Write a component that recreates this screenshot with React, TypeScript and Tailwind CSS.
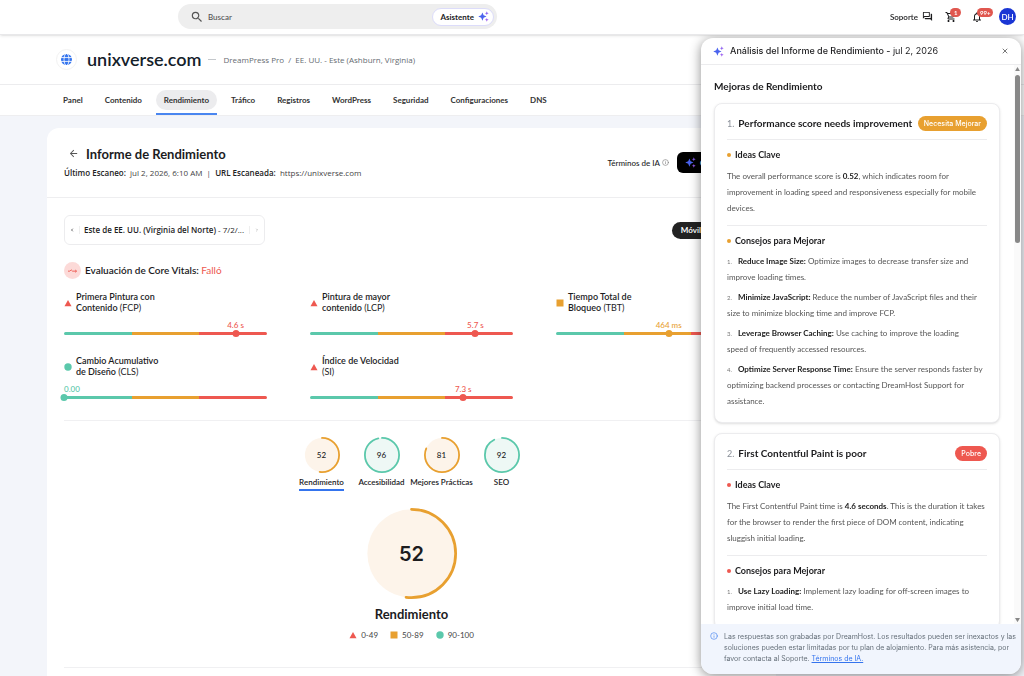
import React from 'react';
import clsx from 'clsx';
import { ChevronLeft, ChevronRight, Info, X } from 'lucide-react';
import {
  MdArrowBack,
  MdNotificationsNone,
  MdOutlineForum,
  MdOutlineShoppingCart,
  MdSearch,
} from 'react-icons/md';

type Level = 'good' | 'fair' | 'poor';

const levelColor: Record<Level, string> = {
  good: '#5bc8ab',
  fair: '#e8a030',
  poor: '#ee5850',
};

const tabs = ['Panel', 'Contenido', 'Rendimiento', 'Tráfico', 'Registros', 'WordPress', 'Seguridad', 'Configuraciones', 'DNS'];

const metrics: { name: string; code: string; value: string; pos: number; level: Level }[] = [
  { name: 'Primera Pintura con Contenido', code: '(FCP)', value: '4.6 s', pos: 84.5, level: 'poor' },
  { name: 'Pintura de mayor contenido', code: '(LCP)', value: '5.7 s', pos: 81.5, level: 'poor' },
  { name: 'Tiempo Total de Bloqueo', code: '(TBT)', value: '464 ms', pos: 55.5, level: 'fair' },
  { name: 'Cambio Acumulativo de Diseño', code: '(CLS)', value: '0.00', pos: 0, level: 'good' },
  { name: 'Índice de Velocidad', code: '(SI)', value: '7.3 s', pos: 75.5, level: 'poor' },
];

const scores: { label: string; value: number; level: Level }[] = [
  { label: 'Rendimiento', value: 52, level: 'fair' },
  { label: 'Accesibilidad', value: 96, level: 'good' },
  { label: 'Mejores Prácticas', value: 81, level: 'fair' },
  { label: 'SEO', value: 92, level: 'good' },
];

interface Finding {
  title: string;
  badge: string;
  level: Level;
  insight: React.ReactNode;
  tips: { title: string; text: string }[];
}

const findings: Finding[] = [
  {
    title: 'Performance score needs improvement',
    badge: 'Necesita Mejorar',
    level: 'fair',
    insight: (
      <>
        The overall performance score is <strong className="text-[#222]">0.52</strong>, which indicates room for
        improvement in loading speed and responsiveness especially for mobile devices.
      </>
    ),
    tips: [
      { title: 'Reduce Image Size:', text: 'Optimize images to decrease transfer size and improve loading times.' },
      { title: 'Minimize JavaScript:', text: 'Reduce the number of JavaScript files and their size to minimize blocking time and improve FCP.' },
      { title: 'Leverage Browser Caching:', text: 'Use caching to improve the loading speed\u00a0of frequently accessed resources.' },
      { title: 'Optimize Server Response Time:', text: 'Ensure the server responds faster by optimizing backend processes or contacting DreamHost Support for assistance.' },
    ],
  },
  {
    title: 'First Contentful Paint is poor',
    badge: 'Pobre',
    level: 'poor',
    insight: (
      <>
        The First Contentful Paint time is <strong className="text-[#222]">4.6 seconds</strong>. This is the duration it
        takes for the browser to render the first piece of DOM content, indicating sluggish initial loading.
      </>
    ),
    tips: [{ title: 'Use Lazy Loading:', text: 'Implement lazy loading for off-screen images to improve initial load time.' }],
  },
];

const Sparkles: React.FC<{ className?: string }> = ({ className }) => (
  <svg viewBox="0 0 20 20" className={className} aria-hidden="true">
    <path d="M8 2.500l2.200 5.300 5.300 2.200-5.300 2.200L8 17.500l-2.200-5.300L.5 10l5.300-2.200z" fill="#4a63ee" />
    <path d="M16 .5l1 2.500 2.500 1-2.500 1-1 2.500-1-2.500-2.500-1 2.500-1z" fill="#8a5cf0" />
    <path d="M16 12.500l1 2.500 2.500 1-2.500 1-1 2.500-1-2.500-2.500-1 2.500-1z" fill="#9a5cf0" />
  </svg>
);

const Globe: React.FC<{ className?: string }> = ({ className }) => (
  <svg viewBox="0 0 20 20" className={className} aria-hidden="true">
    <circle cx="10" cy="10" r="10" fill="#3474ee" />
    <g fill="none" stroke="#fff" strokeWidth="1.5">
      <ellipse cx="10" cy="10" rx="4.500" ry="11" />
      <path d="M0 6.500h20M0 13.500h20" />
    </g>
  </svg>
);

const Marker: React.FC<{ level: Level; className?: string }> = ({ level, className }) => (
  <svg viewBox="0 0 8 8" className={clsx('size-2 shrink-0', className)} fill={levelColor[level]} aria-hidden="true">
    {level === 'good' && <circle cx="4" cy="4" r="3.7" />}
    {level === 'fair' && <rect x="0.5" y="0.5" width="7" height="7" />}
    {level === 'poor' && <path d="M4 1l3.500 6.200h-7z" />}
  </svg>
);

const Gauge: React.FC<{ value: number; level: Level; width: number; className: string }> = ({ value, level, width, className }) => {
  const r = 50 - width / 2;
  return (
    <svg viewBox="0 0 100 100" className={className} aria-hidden="true">
      <circle cx="50" cy="50" r={r} fill={level === 'good' ? '#eef8f5' : '#fdf4ea'} />
      <circle
        cx="50"
        cy="50"
        r={r}
        fill="none"
        stroke={levelColor[level]}
        strokeWidth={width}
        strokeLinecap="round"
        pathLength={100}
        strokeDasharray={`${value} 100`}
        transform="rotate(-90 50 50)"
      />
    </svg>
  );
};

const TopBar: React.FC = () => (
  <header className="relative z-10 flex h-[35px] shrink-0 items-center border-b border-[#e8e8ea] bg-white pr-2 pb-px pl-[178px] shadow-sm">
    <div className="flex h-[25px] w-[319px] items-center rounded-full bg-[#eeeeee] pr-[3px] pl-3">
      <MdSearch className="size-[14px] text-[#555]" />
      <input
        aria-label="Buscar"
        placeholder="Buscar"
        className="min-w-0 flex-1 bg-transparent px-1 text-[8px] font-medium outline-none placeholder:text-[#555]"
      />
      <button className="flex h-[18px] items-center gap-1 rounded-full border border-[#dcdcfa] bg-white pr-1 pl-[7px] text-[8px] font-bold">
        Asistente <Sparkles className="size-[11px]" />
      </button>
    </div>
    <div className="ml-auto flex items-center">
      <button className="flex items-center gap-1 text-[8px] font-semibold">
        Soporte <MdOutlineForum className="size-[11px]" />
      </button>
      <button aria-label="Carrito" className="relative ml-3">
        <MdOutlineShoppingCart className="size-3" />
        <span className="absolute -top-[3px] left-[5px] rounded-full bg-[#e0574f] px-1 text-[6px] leading-[9px] font-bold text-white">1</span>
      </button>
      <button aria-label="Notificaciones" className="relative ml-[14px]">
        <MdNotificationsNone className="size-3" />
        <span className="absolute -top-[3px] left-[6px] rounded-full bg-[#e0574f] px-[3px] text-[6px] leading-[9px] font-bold text-white">99+</span>
      </button>
      <button className="ml-4 size-[17px] rounded-full bg-[#1a36d4] text-[8px] font-semibold text-white">DH</button>
    </div>
  </header>
);

const SiteHeader: React.FC = () => (
  <div className="shrink-0 border-b border-[#eeeef0] bg-white">
    <div className="flex h-[50px] items-center border-b border-[#ececee] pl-14">
      <span className="flex size-[21px] items-center justify-center rounded-full border border-[#f2f2f2]">
        <Globe className="size-[11px]" />
      </span>
      <h1 className="ml-[10px] text-[18px] font-semibold text-[#14202a]">unixverse.com</h1>
      <span className="ml-[6px] h-px w-2 bg-[#c4c8cc]" />
      <p className="ml-2 font-['Open_Sans',sans-serif] text-[8px] text-[#666c72]">DreamPress Pro &nbsp;/&nbsp; EE. UU. - Este (Ashburn, Virginia)</p>
    </div>
    <nav className="flex h-[30px] gap-[6px] pl-[55px]">
      {tabs.map((tab) => {
        const active = tab === 'Rendimiento';
        return (
          <a
            key={tab}
            href="#"
            className={clsx('flex items-center border-b-2 pt-[2px] text-[8px] font-bold text-[#333]', active ? 'border-[#4a86f0]' : 'border-transparent')}
          >
            <span className={clsx('rounded-full px-2 py-1', active && 'bg-[#ececee]')}>{tab}</span>
          </a>
        );
      })}
    </nav>
  </div>
);

const Metric: React.FC<(typeof metrics)[number]> = ({ name, code, value, pos, level }) => (
  <div className="h-16">
    <div className="flex items-center gap-1">
      <Marker level={level} className="mt-[2px]" />
      <h3 className="w-[88px] text-[9px] leading-[11px] font-semibold">
        {name} <span className="font-normal">{code}</span>
      </h3>
    </div>
    <div className="relative mt-[19px]">
      <div className="flex h-[3px] overflow-hidden rounded-full">
        <span className="flex-1 bg-[#5bc8ab]" />
        <span className="flex-1 bg-[#e8a030]" />
        <span className="flex-1 bg-[#ee5850]" />
      </div>
      <span
        className="absolute -top-[2px] size-[7px] -translate-x-1/2 rounded-full"
        style={{ left: `${pos}%`, backgroundColor: levelColor[level] }}
      />
      <span
        className={clsx('absolute bottom-[5px] text-[8px] leading-[10px] font-medium whitespace-nowrap', pos > 0 && '-translate-x-1/2')}
        style={{ left: `${pos}%`, color: levelColor[level] }}
      >
        {value}
      </span>
    </div>
  </div>
);

const Report: React.FC = () => (
  <main className="mt-3 mr-[248px] ml-[47px] min-h-0 flex-1 overflow-hidden rounded-t-xl bg-white">
    <div className="flex h-[70px] items-center justify-between border-b border-[#eeeef0] px-[17px]">
      <div className="pb-[2px]">
        <div className="flex items-center gap-[7px]">
          <button aria-label="Volver" className="ml-1">
            <MdArrowBack className="size-[11px] text-[#555]" />
          </button>
          <h2 className="text-[13px] leading-[18px] font-bold">Informe de Rendimiento</h2>
        </div>
        <p className="mt-1 font-['Open_Sans',sans-serif] text-[8px] leading-[12px] text-[#444]">
          <strong className="font-semibold text-[#222]">Último Escaneo:</strong>&nbsp; jul 2, 2026, 6:10 AM &nbsp;|&nbsp;{' '}
          <strong className="font-semibold text-[#222]">URL Escaneada:</strong>&nbsp; https://unixverse.com
        </p>
      </div>
      <div className="flex items-center gap-2">
        <a href="#" className="flex items-center gap-[2px] text-[8px] font-medium">
          Términos de IA <Info className="size-[7px] text-[#777]" />
        </a>
        <button className="flex h-[21px] w-[82px] items-center gap-1 rounded-md bg-black px-2 text-[8px] whitespace-nowrap text-white">
          <Sparkles className="size-[11px]" /> Generar
        </button>
      </div>
    </div>

    <div className="px-[17px]">
      <div className="flex items-center justify-between pt-[17px]">
        <div className="flex h-[30px] w-[201px] items-center rounded-md border border-[#ececee] px-[5px] text-[8px]">
          <button aria-label="Anterior" className="border-r border-[#eee] py-[2px] pr-[5px]">
            <ChevronLeft className="size-1" strokeWidth={4} />
          </button>
          <span className="flex-1 pl-1 font-['Open_Sans',sans-serif] whitespace-nowrap">
            <span className="font-semibold">Este de EE. UU. (Virginia del Norte)</span> - 7/2/...
          </span>
          <button aria-label="Siguiente" className="border-l border-[#eee] py-[2px] pl-[5px] text-[#aaa]">
            <ChevronRight className="size-1" strokeWidth={4} />
          </button>
        </div>
        <button className="mr-[49px] h-[17px] rounded-full bg-[#222] px-[9px] text-[8px] font-bold text-white">Móvil</button>
      </div>

      <div className="mt-[17px] flex items-center gap-1">
        <span className="flex size-[17px] items-center justify-center rounded-full bg-[#fcdad8] text-[#ee5850]">
          <svg viewBox="0 0 10 6" className="w-[9px]" fill="none" stroke="currentColor">
            <path d="M0 3.500h2l1.500-1.500 1.500 1.500h4.500M8 2.200l1.500 1.300L8 4.800" />
          </svg>
        </span>
        <h3 className="text-[10px] font-semibold">
          Evaluación de Core Vitals: <span className="font-normal text-[#ee5850]">Falló</span>
        </h3>
      </div>

      <div className="mt-3 grid grid-cols-3 gap-x-[43px] border-b border-[#f0f0f2] pb-px">
        {metrics.map((m) => (
          <Metric key={m.code} {...m} />
        ))}
      </div>

      <div className="flex justify-center pt-4" role="tablist">
        {scores.map((s, i) => (
          <button key={s.label} role="tab" aria-selected={i === 0} className="flex w-[60px] flex-col items-center">
            <span className="relative flex size-9 items-center justify-center">
              <Gauge value={s.value} level={s.level} width={5} className="absolute inset-0" />
              <span className="relative text-[8px] font-medium">{s.value}</span>
            </span>
            <span className={clsx('mt-1 border-b-2 pb-px text-[8px] leading-[11px] font-semibold whitespace-nowrap', i === 0 ? 'border-[#3474ee]' : 'border-transparent')}>
              {s.label}
            </span>
          </button>
        ))}
      </div>

      <div className="mt-[17px] flex flex-col items-center border-b border-[#f0f0f2] pb-[25px]">
        <span className="relative flex size-[91px] items-center justify-center">
          <Gauge value={52} level="fair" width={3} className="absolute inset-0" />
          <span className="relative font-['Inter',sans-serif] text-[20px] font-semibold">52</span>
        </span>
        <h3 className="mt-[5px] text-[13px] leading-[20px] font-bold">Rendimiento</h3>
        <ul className="mt-1 flex gap-3 text-[8px] leading-[14px] text-[#444]">
          <li className="flex items-center gap-1"><Marker level="poor" /> 0-49</li>
          <li className="flex items-center gap-1"><Marker level="fair" /> 50-89</li>
          <li className="flex items-center gap-1"><Marker level="good" /> 90-100</li>
        </ul>
      </div>
    </div>
  </main>
);

const SectionTitle: React.FC<{ level: Level; children: React.ReactNode }> = ({ level, children }) => (
  <h4 className="flex items-center gap-1 text-[9px] leading-[12px] font-bold">
    <span className="size-1 rounded-full" style={{ backgroundColor: levelColor[level] }} />
    {children}
  </h4>
);

const FindingCard: React.FC<{ finding: Finding; index: number }> = ({ finding, index }) => (
  <article className="rounded-lg border border-[#ececee] bg-white px-3 pt-3 pb-[13px] shadow-sm">
    <div className="flex items-center border-b border-[#ececee] pb-2">
      <span className="mr-1 text-[9px] text-[#8a9099]">{index}.</span>
      <h3 className="text-[10px] font-bold">{finding.title}</h3>
      <span
        className={clsx(
          "ml-auto rounded-full px-[6px] font-['Inter',sans-serif] text-[7px] leading-[15px] font-medium text-white",
          finding.level === 'fair' ? 'bg-[#e8a030]' : 'bg-[#ee5850]',
        )}
      >
        {finding.badge}
      </span>
    </div>
    <div className="mt-[9px] border-b border-[#ececee] pb-[9px]">
      <SectionTitle level={finding.level}>Ideas Clave</SectionTitle>
      <p className="mt-[7px] text-[8px] leading-[16px] text-[#555]">{finding.insight}</p>
    </div>
    <div className="mt-[9px]">
      <SectionTitle level={finding.level}>Consejos para Mejorar</SectionTitle>
      <ol className="mt-[6px] space-y-1 text-[8px] leading-[16px] text-[#555]">
        {finding.tips.map((tip, i) => (
          <li key={tip.title}>
            <span className="mr-[6px] text-[6px] leading-none text-[#777]">{i + 1}.</span>
            <strong className="text-[#222]">{tip.title}</strong> {tip.text}
          </li>
        ))}
      </ol>
    </div>
  </article>
);

const AnalysisPanel: React.FC = () => (
  <aside className="fixed top-[38px] right-[3px] bottom-[2px] flex w-80 flex-col overflow-hidden rounded-xl bg-white shadow-[0_2px_12px_rgba(0,0,0,0.45)]">
    <div className="flex h-[27px] shrink-0 items-center border-b border-[#ececee] px-3">
      <Sparkles className="size-[11px]" />
      <h2 className="ml-[6px] font-['Inter',sans-serif] text-[9px] font-medium">
        Análisis del Informe de Rendimiento - <span className="font-normal">jul 2, 2026</span>
      </h2>
      <button aria-label="Cerrar" className="ml-auto">
        <X className="size-2 text-[#333]" />
      </button>
    </div>
    <div className="flex min-h-0 flex-1">
      <div className="min-w-0 flex-1 overflow-hidden pr-[14px] pl-[13px]">
        <h3 className="mt-[14px] text-[10px] leading-[14px] font-bold">Mejoras de Rendimiento</h3>
        <div className="mt-[10px] space-y-[10px]">
          {findings.map((f, i) => (
            <FindingCard key={f.title} finding={f} index={i + 1} />
          ))}
        </div>
      </div>
      <div className="flex w-[7px] flex-col items-center bg-[#fafafa] py-[2px] text-[#888]" aria-hidden="true">
        <svg viewBox="0 0 6 5" className="w-[5px]" fill="currentColor"><path d="M3 0l3 5H0z" /></svg>
        <span className="mt-1 h-[168px] w-[5px] rounded-full bg-[#888]" />
        <svg viewBox="0 0 6 5" className="mt-auto w-[5px]" fill="currentColor"><path d="M0 0h6L3 5z" /></svg>
      </div>
    </div>
    <footer className="flex h-[50px] shrink-0 gap-[6px] bg-[#f1f5fd] pt-[7px] pr-1 pl-[9px] font-['Inter',sans-serif] text-[7px] leading-[11px] text-[#66707a]">
      <Info className="mt-px size-2 shrink-0 text-[#4a86f0]" />
      <p>
        Las respuestas son grabadas por DreamHost. Los resultados pueden ser inexactos y las soluciones pueden estar
        limitadas por tu plan de alojamiento. Para más asistencia, por favor contacta al Soporte.{' '}
        <a href="#" className="text-[#3474ee] underline">Términos de IA.</a>
      </p>
    </footer>
  </aside>
);

const App: React.FC = () => (
  <div className="flex h-screen flex-col overflow-hidden bg-[#f3f5fa] font-['Lato','Open_Sans',sans-serif] text-[#1c1c1e]">
    <TopBar />
    <SiteHeader />
    <Report />
    <AnalysisPanel />
  </div>
);

export default App;
